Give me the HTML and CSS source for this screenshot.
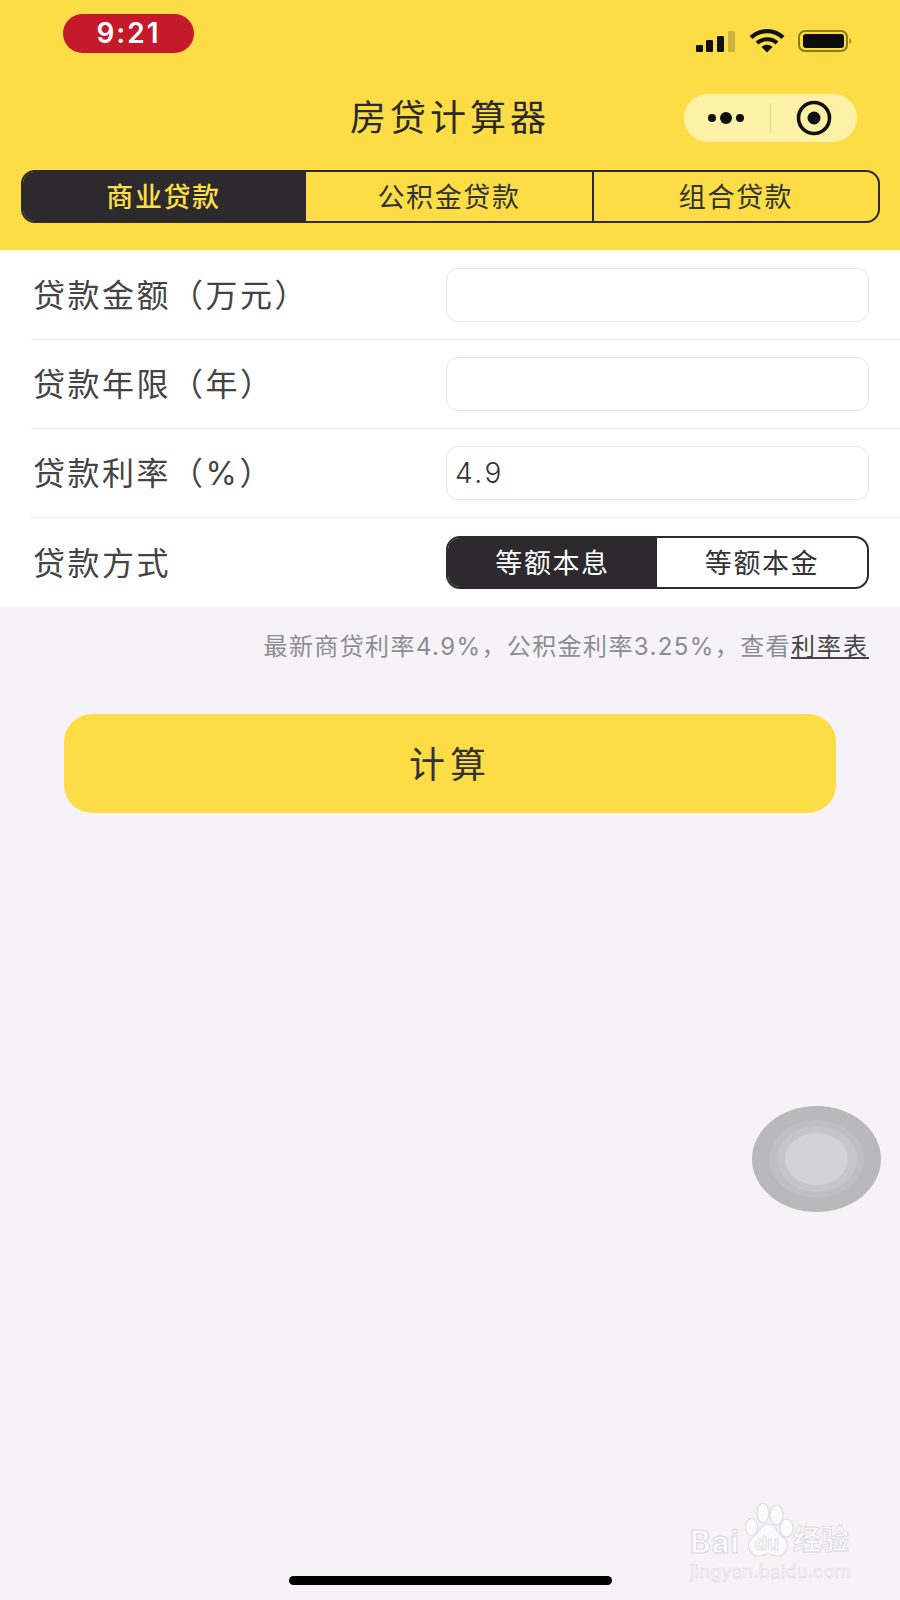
FILE: index.html
```html
<!DOCTYPE html>
<html lang="zh-CN">
<head>
    <meta charset="UTF-8">
    <meta name="viewport" content="width=device-width, initial-scale=1.0">
    <title>房贷计算器</title>
    <link rel="stylesheet" href="styles.css">
</head>
<body>

    <div class="page">
        <header class="header">
            <div class="status-bar">
                <span class="clock">9:21</span>
                <div class="status-icons">
                    <svg width="40" height="22" viewBox="0 0 40 22">
                        <rect x="0" y="15" width="7" height="7" rx="1" fill="#111"/>
                        <rect x="10" y="10" width="7" height="12" rx="1" fill="#111"/>
                        <rect x="21" y="6" width="7" height="16" rx="1" fill="#111"/>
                        <rect x="32" y="1" width="7" height="21" rx="1" fill="#c9b23f"/>
                    </svg>
                    <svg width="36" height="24" viewBox="0 0 36 24">
                        <path d="M2 8.5 C11 0 25 0 34 8.5" fill="none" stroke="#111" stroke-width="4.2"/>
                        <path d="M8 14 C13.5 9 22.5 9 28 14" fill="none" stroke="#111" stroke-width="4.2"/>
                        <path d="M12.5 18 C15.5 15 20.5 15 23.5 18 L18 23.5 Z" fill="#111"/>
                    </svg>
                    <svg width="54" height="22" viewBox="0 0 54 22">
                        <rect x="1" y="1" width="48" height="20" rx="6" fill="none" stroke="#8a7a22" stroke-width="2"/>
                        <rect x="5" y="4" width="41" height="14" rx="3" fill="#0c0c0c"/>
                        <path d="M51.5 8 C53.5 9 53.5 13 51.5 14 Z" fill="#8a7a22"/>
                    </svg>
                </div>
            </div>

            <div class="nav-bar">
                <h1 class="nav-title">房贷计算器</h1>
                <div class="capsule">
                    <div class="capsule-dots">
                        <span class="dot"></span>
                        <span class="dot dot-big"></span>
                        <span class="dot"></span>
                    </div>
                    <span class="capsule-line"></span>
                    <svg width="36" height="36" viewBox="0 0 36 36">
                        <circle cx="18" cy="18" r="15.5" fill="none" stroke="#111" stroke-width="3.6"/>
                        <circle cx="18" cy="18" r="6.5" fill="#111"/>
                    </svg>
                </div>
            </div>

            <div class="tabs">
                <div class="tab tab-active">商业贷款</div>
                <div class="tab">公积金贷款</div>
                <div class="tab">组合贷款</div>
            </div>
        </header>

        <section class="form">
            <div class="row">
                <label class="row-label" for="amount">贷款金额（万元）</label>
                <input class="row-input" type="text" id="amount">
            </div>
            <div class="row">
                <label class="row-label" for="years">贷款年限（年）</label>
                <input class="row-input" type="text" id="years">
            </div>
            <div class="row">
                <label class="row-label" for="rate">贷款利率（%）</label>
                <input class="row-input" type="text" id="rate" value="4.9">
            </div>
            <div class="row">
                <span class="row-label">贷款方式</span>
                <div class="toggle">
                    <div class="toggle-item toggle-active">等额本息</div>
                    <div class="toggle-item">等额本金</div>
                </div>
            </div>
        </section>

        <p class="hint">最新商贷利率4.9%，公积金利率3.25%，查看<a class="hint-link" href="#">利率表</a></p>

        <button class="calc-btn" type="button">计算</button>

        <div class="home-bar"></div>

        <!-- floating ball -->
        <div class="ball">
            <div class="ball-ring ball-ring-1">
                <div class="ball-ring ball-ring-2">
                    <div class="ball-ring ball-ring-3"></div>
                </div>
            </div>
        </div>

        <!-- watermark -->
        <div class="watermark">
            <div class="wm-top">
                <span class="wm-bai">Bai</span>
                <div class="wm-paw">
                    <svg width="50" height="56" viewBox="0 0 50 56">
                        <g fill="#fbfbfc" stroke="#dedde0" stroke-width="1.2">
                            <ellipse cx="6.5" cy="25" rx="6" ry="8.5"/>
                            <ellipse cx="18" cy="11" rx="6" ry="10"/>
                            <ellipse cx="31.5" cy="13" rx="6.5" ry="10"/>
                            <ellipse cx="41.5" cy="26" rx="6.5" ry="9"/>
                            <path d="M23 22 C31 22 31 30 38 35 C46 41 42 54 32 54 C28 54 26 52 23 52 C20 52 18 54 14 54 C4 54 0 41 8 35 C15 30 15 22 23 22 Z"/>
                        </g>
                    </svg>
                    <span class="wm-du">du</span>
                </div>
                <span class="wm-cn">经验</span>
            </div>
            <div class="wm-url">jingyan.baidu.com</div>
        </div>
    </div>

</body>
</html>
```

FILE: styles.css
```css
/* Basic Reset */
* {
    margin: 0;
    padding: 0;
    box-sizing: border-box;
}

body {
    font-family: Inter, "Noto Sans CJK SC", sans-serif;
    background-color: #f5f3f8;
    color: #333;
}

.page {
    position: relative;
    height: 1600px;
    overflow: hidden;
    display: flex;
    flex-direction: column;
}

/* Yellow header */
.header {
    height: 250px;
    background-color: #fcdd46;
}

.status-bar {
    height: 94px;
    padding: 14px 48px 0 63px;
    display: flex;
    justify-content: space-between;
    align-items: flex-start;
}

.clock {
    width: 131px;
    height: 39px;
    border-radius: 20px;
    background-color: #c51a2b;
    color: #fff;
    font-size: 28px;
    font-weight: 600;
    letter-spacing: 2px;
    line-height: 39px;
    text-align: center;
}

.status-icons {
    display: flex;
    align-items: center;
    gap: 13px;
    margin-top: 15px;
}

.nav-bar {
    height: 48px;
    padding: 0 43px;
    display: grid;
    grid-template-columns: 1fr auto 1fr;
    align-items: center;
}

.nav-title {
    grid-column: 2;
    font-size: 36px;
    font-weight: 400;
    line-height: 48px;
    letter-spacing: 4px;
    color: #2b2a2a;
    white-space: nowrap;
}

.capsule {
    grid-column: 3;
    justify-self: end;
    width: 173px;
    height: 48px;
    border-radius: 24px;
    background-color: #fdf1a8;
    padding: 0 25px 0 24px;
    display: flex;
    align-items: center;
    justify-content: space-between;
}

.capsule-dots {
    display: flex;
    align-items: center;
    gap: 4px;
}

.dot {
    width: 8px;
    height: 8px;
    border-radius: 50%;
    background-color: #111;
}

.dot-big {
    width: 12px;
    height: 12px;
}

.capsule-line {
    width: 1px;
    height: 30px;
    background-color: #e8d98a;
}

/* Loan type tabs */
.tabs {
    height: 53px;
    margin: 28px 20px 0 21px;
    display: grid;
    grid-template-columns: 281px 288px 1fr;
    border: 2px solid #2d2a2e;
    border-radius: 14px;
    overflow: hidden;
}

.tab {
    padding-bottom: 3px;
    display: flex;
    align-items: center;
    justify-content: center;
    font-size: 27px;
    letter-spacing: 1.6px;
    color: #333;
    border-left: 2px solid #2d2a2e;
}

.tab:first-child {
    border-left: none;
}

.tab-active {
    background-color: #2d2a2e;
    color: #fcdd46;
    font-weight: 500;
}

/* Form rows */
.form {
    height: 357px;
    padding-top: 1px;
    background-color: #fff;
    display: grid;
    grid-template-rows: repeat(4, 1fr);
}

.row {
    margin-left: 31px;
    padding: 0 31px 0 2px;
    display: flex;
    align-items: center;
    justify-content: space-between;
    border-bottom: 1px solid #e9e8ea;
}

.row:last-child {
    border-bottom: none;
}

.row-label {
    padding-bottom: 4px;
    font-size: 32px;
    letter-spacing: 2.5px;
    color: #444;
    white-space: nowrap;
}

.row-input {
    width: 423px;
    height: 54px;
    padding: 0 8px;
    border: 1.5px solid #e6e5e8;
    border-radius: 12px;
    background-color: #fff;
    font-family: inherit;
    font-size: 28px;
    font-weight: 300;
    letter-spacing: 2.5px;
    color: #333;
    outline: none;
}

.toggle {
    width: 423px;
    height: 53px;
    display: grid;
    grid-template-columns: 209px 1fr;
    border: 2px solid #2d2a2e;
    border-radius: 14px;
    overflow: hidden;
}

.toggle-item {
    padding-bottom: 2px;
    display: flex;
    align-items: center;
    justify-content: center;
    font-size: 27px;
    letter-spacing: 1.6px;
    color: #333;
}

.toggle-active {
    background-color: #2d2a2e;
    color: #fff;
}

/* Hint line */
.hint {
    margin-top: 24px;
    padding-right: 31px;
    font-size: 24px;
    line-height: 32px;
    letter-spacing: 1.4px;
    color: #8d8c91;
    text-align: right;
    white-space: nowrap;
}

.hint-link {
    color: #444;
    letter-spacing: 2px;
    text-decoration: underline;
}

.calc-btn {
    width: 772px;
    height: 99px;
    margin: 51px 0 0 64px;
    padding-bottom: 3px;
    border: none;
    border-radius: 28px;
    background-color: #fcdd46;
    font-family: inherit;
    font-size: 36px;
    letter-spacing: 5px;
    color: #333;
}

.home-bar {
    width: 323px;
    height: 9px;
    margin: auto auto 15px;
    border-radius: 5px;
    background-color: #000;
}

/* Floating ball */
.ball {
    position: absolute;
    left: 752px;
    top: 1106px;
    width: 129px;
    height: 106px;
    border-radius: 50%;
    background-color: #b9b8bb;
    display: flex;
    align-items: center;
    justify-content: center;
}

.ball-ring {
    border-radius: 50%;
    display: flex;
    align-items: center;
    justify-content: center;
}

.ball-ring-1 {
    width: 95px;
    height: 78px;
    background-color: #bfbec1;
}

.ball-ring-2 {
    width: 80px;
    height: 66px;
    background-color: #c6c5c8;
}

.ball-ring-3 {
    width: 63px;
    height: 52px;
    background-color: #d3d2d4;
}

/* Watermark */
.watermark {
    position: absolute;
    left: 690px;
    top: 1502px;
    width: 164px;
    color: #fbfbfc;
}

.wm-top {
    display: flex;
    align-items: flex-end;
    height: 56px;
}

.wm-bai {
    width: 55px;
    font-size: 31px;
    font-weight: 700;
    line-height: 32px;
    letter-spacing: 1px;
    -webkit-text-stroke: 1px #d9d8db;
}

.wm-paw {
    position: relative;
    width: 50px;
    height: 56px;
}

.wm-du {
    position: absolute;
    left: 10px;
    top: 32px;
    font-size: 19px;
    font-weight: 700;
    line-height: 20px;
    -webkit-text-stroke: 0.6px #cfced1;
}

.wm-cn {
    margin-left: -2px;
    font-size: 28px;
    font-weight: 700;
    line-height: 36px;
    white-space: nowrap;
    -webkit-text-stroke: 0.8px #d9d8db;
}

.wm-url {
    margin-top: 3px;
    font-size: 18px;
    line-height: 22px;
    letter-spacing: 0.3px;
    white-space: nowrap;
    -webkit-text-stroke: 0.6px #d9d8db;
}
```
